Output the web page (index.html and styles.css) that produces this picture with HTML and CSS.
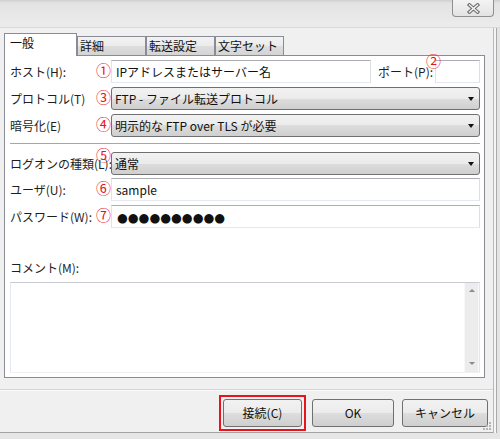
FILE: index.html
```html
<!DOCTYPE html>
<html lang="ja">
<head>
<meta charset="utf-8">
<link rel="stylesheet" href="styles.css">
</head>
<body>
<div class="window">
  <div class="titlebar">
    <div class="close-btn">
      <svg width="13" height="11" viewBox="0 0 13 11"><path d="M2.5 2 L10.5 9 M10.5 2 L2.5 9" stroke="#707070" stroke-width="3.6" stroke-linecap="square"/><path d="M2.5 2 L10.5 9 M10.5 2 L2.5 9" stroke="#f6f6f6" stroke-width="1.4" stroke-linecap="square"/></svg>
    </div>
  </div>
  <div class="frame">
    <div class="client">
      <div class="tabs">
        <div class="tab active">一般</div>
        <div class="tab">詳細</div>
        <div class="tab">転送設定</div>
        <div class="tab">文字セット</div>
      </div>
      <div class="panel">
        <div class="row">
          <span class="label">ホスト(H):</span>
          <span class="mark">①</span>
          <div class="input host-input">IPアドレスまたはサーバー名</div>
          <span class="port-label">ポート(P):</span>
          <span class="badge port-badge">②</span>
          <div class="input port-input"></div>
        </div>
        <div class="row gap4">
          <span class="label">プロトコル(T)</span>
          <span class="mark">③</span>
          <div class="select"><span>FTP - ファイル転送プロトコル</span><span class="arrow"></span></div>
        </div>
        <div class="row gap4">
          <span class="label">暗号化(E)</span>
          <span class="mark">④</span>
          <div class="select"><span>明示的な FTP over TLS が必要</span><span class="arrow"></span></div>
        </div>
        <div class="sep"></div>
        <div class="row">
          <span class="label wide">ログオンの種類(L):</span>
          <span class="badge logon-badge">⑤</span>
          <div class="select"><span>通常</span><span class="arrow"></span></div>
        </div>
        <div class="row gap3">
          <span class="label">ユーザ(U):</span>
          <span class="mark">⑥</span>
          <div class="input full">sample</div>
        </div>
        <div class="row gap4">
          <span class="label">パスワード(W):</span>
          <span class="mark">⑦</span>
          <div class="input full"><span class="dots">●●●●●●●●●●</span></div>
        </div>
        <div class="comment-label">コメント(M):</div>
        <div class="comment">
          <div class="scrollbar"><span class="sb-up"></span><span class="sb-down"></span></div>
        </div>
      </div>
      <div class="divider"></div>
      <div class="footer">
        <div class="focus-ring"><div class="btn connect">接続(C)</div></div>
        <div class="btn ok">OK</div>
        <div class="btn cancel">キャンセル</div>
      </div>
      <svg class="grip" width="10" height="9" viewBox="0 0 10 9"><g fill="#b4b4b4"><rect x="7" y="0" width="2" height="2"/><rect x="4" y="3" width="2" height="2"/><rect x="7" y="3" width="2" height="2"/><rect x="1" y="6" width="2" height="2"/><rect x="4" y="6" width="2" height="2"/><rect x="7" y="6" width="2" height="2"/></g></svg>
    </div>
    <div class="edge"></div>
  </div>
  <div class="bottom-edge"></div>
</div>
</body>
</html>
```
FILE: styles.css
```css
* { box-sizing: border-box; }
html, body { margin: 0; padding: 0; }
body {
  width: 500px;
  height: 439px;
  overflow: hidden;
  background: #ececec;
  font-family: "Noto Sans CJK JP", "Noto Sans", sans-serif;
  font-size: 12px;
  color: #1e1e1e;
}
.window { width: 500px; height: 439px; display: flex; flex-direction: column; }
.titlebar {
  height: 28px;
  flex: none;
  display: flex;
  justify-content: flex-end;
  padding-right: 6px;
  background: linear-gradient(#cfcfcf 0, #e3e3e3 3px, #ececec 100%);
  border-bottom: 1px solid #d9d9d9;
}
.close-btn {
  width: 42px;
  height: 17px;
  border: 1px solid #8f8f8f;
  border-top: none;
  border-radius: 0 0 4px 4px;
  background: linear-gradient(#f3f3f3, #e3e3e3);
  display: flex;
  align-items: center;
  justify-content: center;
}
.frame { display: flex; height: 405px; flex: none; }
.client {
  width: 494px;
  height: 405px;
  flex: none;
  border-right: 1px solid #b8b8b8;
  border-bottom: 1px solid #a3a3a3;
  background: #f0f0f0;
  display: flex;
  flex-direction: column;
  padding: 5px 0 0 4px;
  position: relative;
}
.edge { flex: 1; background: linear-gradient(to right, #f4f4f4 0 2px, #a9a9a9 2px 3px, #e4e4e4 3px); }
.bottom-edge { flex: 1; background: #e6e6e6; }

.tabs { display: flex; align-items: flex-end; height: 22px; flex: none; }
.tab {
  width: 69px;
  height: 19px;
  border: 1px solid #898c95;
  border-bottom: none;
  background: linear-gradient(#f3f3f3, #ebebeb 50%, #dedede 50%, #d4d4d4);
  padding-left: 2px;
  line-height: 17px;
  white-space: nowrap;
  color: #111;
}
.tab.active {
  width: 73px;
  height: 23px;
  margin-bottom: -1px;
  background: #fff;
  padding-left: 5px;
  line-height: 18px;
  position: relative;
  z-index: 1;
}
.panel {
  width: 481px;
  height: 323px;
  flex: none;
  border: 1px solid #898c95;
  background: #fff;
  padding: 4px 4px 4px 5px;
  display: flex;
  flex-direction: column;
}
.row { display: flex; align-items: center; height: 23px; flex: none; position: relative; }
.gap4 { margin-top: 4px; }
.gap3 { margin-top: 3px; }
.label { width: 86px; flex: none; white-space: nowrap; }
.label.wide { width: 101px; }
.mark {
  width: 15px;
  flex: none;
  color: #e8141b;
  font-size: 15px;
  line-height: 15px;
  text-align: center;
  margin-bottom: 4px;
}
.badge {
  position: absolute;
  color: #e8141b;
  font-size: 15px;
  line-height: 15px;
  width: 15px;
  text-align: center;
}
.port-badge { left: 416px; top: -7px; }
.logon-badge { left: 86px; top: -5px; }
.input {
  height: 23px;
  border: 1px solid;
  border-color: #abadb3 #dbdfe6 #e3e9ef #e2e3ea;
  background: #fff;
  padding-left: 4px;
  line-height: 21px;
  white-space: nowrap;
  color: #111;
}
.host-input { width: 260px; flex: none; }
.port-label { margin-left: 7px; white-space: nowrap; }
.port-input { width: 45px; margin-left: auto; flex: none; }
.full { flex: 1; }
.dots {
  font-family: "DejaVu Sans", sans-serif;
  font-size: 12.4px;
  letter-spacing: 0;
  margin-left: 1px;
}
.select {
  flex: 1;
  height: 23px;
  border: 1px solid #707070;
  border-radius: 3px;
  background: linear-gradient(#f2f2f2, #ebebeb 50%, #dddddd 50%, #cfcfcf);
  padding: 0 5px 0 3px;
  display: flex;
  align-items: center;
  justify-content: space-between;
  white-space: nowrap;
  color: #111;
}
.arrow {
  width: 0;
  height: 0;
  border-left: 3px solid transparent;
  border-right: 3px solid transparent;
  border-top: 4px solid #111;
}
.sep { height: 1px; background: #a7a7a7; margin: 6px 0 8px; flex: none; }
.comment-label { margin-top: 32px; height: 16px; line-height: 16px; margin-bottom: 6px; flex: none; }
.comment {
  flex: 1;
  border: 1px solid;
  border-color: #c9cbd2 #e3e6ec #eef0f4 #e6e8ee;
  display: flex;
  justify-content: flex-end;
}
.scrollbar {
  width: 15px;
  background: #ececec;
  border-left: 1px solid #f8f8f8;
  border-right: 1px solid #f8f8f8;
  display: flex;
  flex-direction: column;
  justify-content: space-between;
  align-items: center;
  padding: 6px 0 7px;
}
.sb-up, .sb-down { width: 0; height: 0; border-left: 3px solid transparent; border-right: 3px solid transparent; }
.sb-up { border-bottom: 3px solid #8a8a8a; }
.sb-down { border-top: 3px solid #8a8a8a; }
.divider {
  margin: 11px 0 0 -4px;
  height: 2px;
  flex: none;
  border-top: 1px solid #d3d3d3;
  border-bottom: 1px solid #fbfbfb;
}
.footer {
  display: flex;
  justify-content: flex-end;
  align-items: flex-start;
  padding: 4px 5px 0 0;
}
.focus-ring { border: 2px solid #e8141b; padding: 2px; margin-right: 6px; }
.btn {
  height: 28px;
  border: 1px solid #707070;
  border-radius: 3px;
  background: linear-gradient(#f2f2f2, #ebebeb 50%, #dddddd 50%, #cfcfcf);
  text-align: center;
  line-height: 26px;
  color: #111;
  white-space: nowrap;
}
.connect { width: 79px; }
.ok { width: 82px; margin-top: 4px; margin-right: 8px; }
.cancel { width: 86px; margin-top: 4px; }
.grip { position: absolute; right: 1px; bottom: 1px; }
```
